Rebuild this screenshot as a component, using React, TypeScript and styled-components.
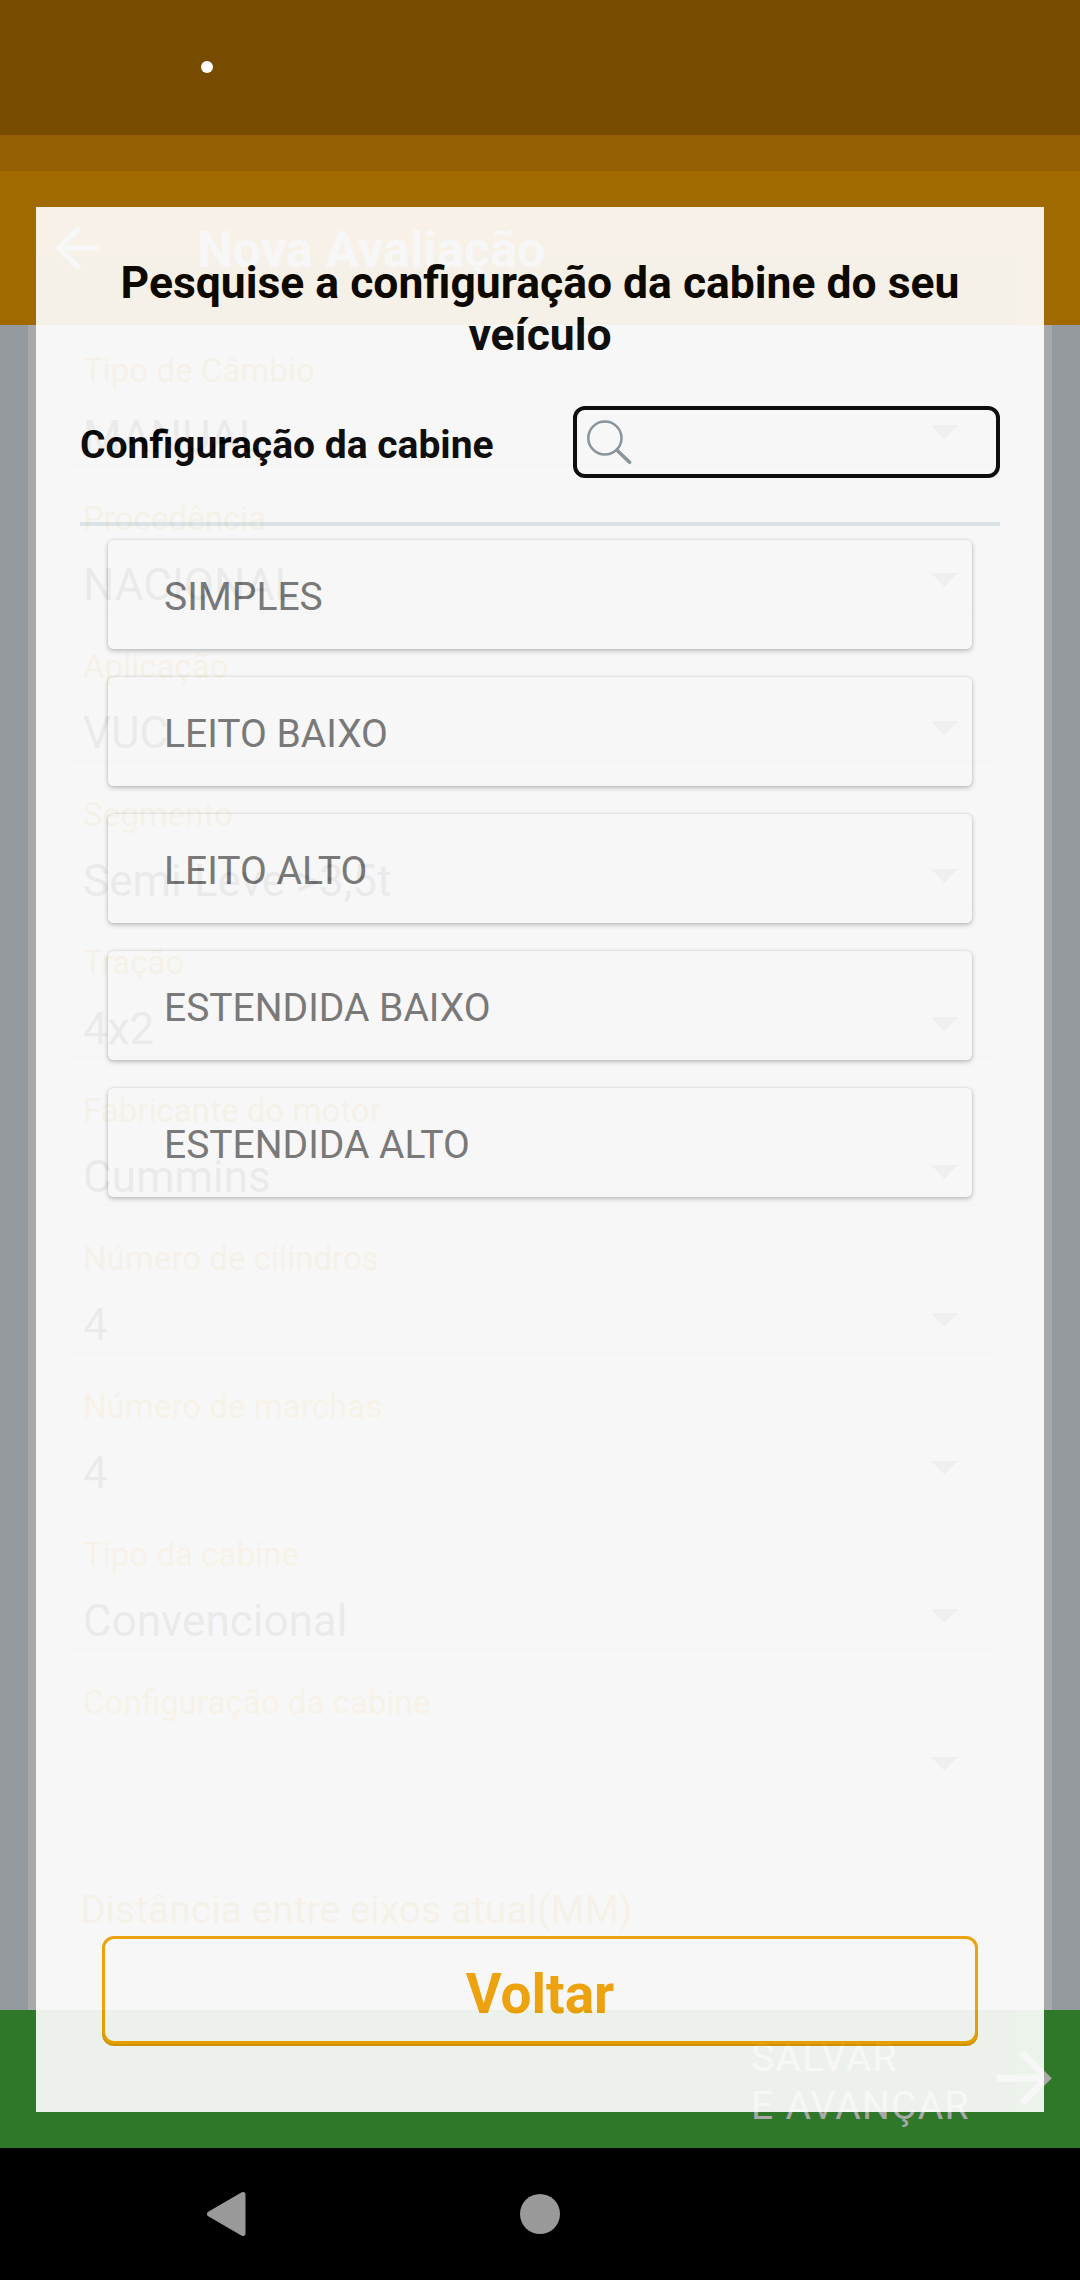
import React from "react";
import styled, { createGlobalStyle } from "styled-components";

const GlobalStyle = createGlobalStyle`
  *, *::before, *::after { box-sizing: border-box; }
  html, body { margin: 0; padding: 0; background: #000; }
  body { font-family: Roboto, "Noto Sans", sans-serif; }
`;

const Screen = styled.div`
  position: relative;
  display: flex;
  flex-direction: column;
  width: 1080px;
  height: 2280px;
  overflow: hidden;
  background: #000;
`;

const StatusBar = styled.div`
  flex: none;
  height: 135px;
  padding: 61px 0 0 201px;
  background: #774c01;
`;

const StatusDot = styled.div`
  width: 12px;
  height: 12px;
  border-radius: 50%;
  background: #fff;
`;

const StatusStrip = styled.div`
  flex: none;
  height: 36px;
  background: #945e03;
`;

const AppBar = styled.header`
  flex: none;
  display: flex;
  align-items: center;
  height: 154px;
  padding-left: 44px;
  background: #a16a00;
  color: #a9a9a9;
`;

const AppTitle = styled.h1`
  margin: 0 0 0 87px;
  padding-top: 3px;
  font-size: 50.4px;
  line-height: 60px;
  font-weight: 700;
  white-space: nowrap;
`;

const Content = styled.main`
  flex: 1;
  display: flex;
  min-height: 0;
  padding: 0 28px;
  background: #949a9e;
`;

const FormCard = styled.div`
  flex: 1;
  padding: 26px 55px 0 42px;
  background: #a9a9a9;
`;

const Field = styled.div`
  display: grid;
  grid-template-columns: 1fr auto;
  grid-template-rows: 39px 74px 2px;
  height: 148px;
`;

const FieldLabel = styled.div`
  grid-column: 1 / 3;
  padding-left: 13px;
  font-size: 33.1px;
  line-height: 39px;
  color: #a16a00;
  white-space: nowrap;
`;

const FieldValue = styled.div`
  padding: 21px 0 0 13px;
  font-size: 44px;
  line-height: 52px;
  color: #161616;
  white-space: nowrap;
`;

const FieldArrow = styled.svg`
  width: 27px;
  height: 14px;
  margin: 35px 39px 0 0;
  fill: #555;
`;

const FieldLine = styled.div`
  grid-column: 1 / 3;
  background: #959595;
`;

const Distance = styled.div`
  margin: 57px -3px 0 10px;
  padding-bottom: 10px;
  border-bottom: 2px solid #959595;
  font-size: 39px;
  line-height: 45px;
  color: #a16a00;
  white-space: nowrap;
`;

const SaveBar = styled.footer`
  flex: none;
  display: flex;
  justify-content: flex-end;
  height: 138px;
  padding-right: 14.5px;
  background: #2f7829;
  color: #a9a9a9;
`;

const SaveText = styled.div`
  width: 232px;
  padding-top: 24px;
  font-size: 39px;
  line-height: 48px;
  letter-spacing: 1.3px;
  white-space: pre;
`;

const SaveArrow = styled.svg`
  width: 82.5px;
  height: 82.5px;
  margin-top: 27px;
  fill: currentColor;
`;

const NavBar = styled.nav`
  flex: none;
  display: flex;
  align-items: center;
  height: 132px;
  padding-left: 205.5px;
  background: #000;
`;

const BackKey = styled.svg`
  width: 40px;
  height: 46px;
  fill: #999;
  stroke: #999;
`;

const HomeKey = styled.div`
  width: 40px;
  height: 40px;
  margin-left: 274.5px;
  border-radius: 50%;
  background: #999;
`;

const Dialog = styled.section`
  position: absolute;
  left: 36px;
  top: 207px;
  display: flex;
  flex-direction: column;
  width: 1008px;
  height: 1905px;
  padding: 50px 44px 68px;
  background: #fff;
  opacity: 0.91;
`;

const DialogTitle = styled.h2`
  margin: 0;
  font-size: 44.45px;
  line-height: 52px;
  font-weight: 700;
  text-align: center;
  color: #000;
`;

const SearchRow = styled.div`
  display: flex;
  justify-content: space-between;
  height: 72px;
  margin-top: 45px;
`;

const SearchLabel = styled.label`
  padding-top: 17px;
  font-size: 39px;
  line-height: 45px;
  font-weight: 700;
  color: #000;
`;

const SearchBox = styled.div`
  width: 427px;
  padding: 9px;
  border: 4px solid #000;
  border-radius: 12px;
`;

const SearchGlyph = styled.svg`
  display: block;
  width: 48px;
  height: 48px;
  fill: none;
  stroke: #87929a;
  stroke-linecap: round;
`;

const Divider = styled.div`
  height: 4px;
  margin-top: 44px;
  background: #e0e9ed;
`;

const OptionList = styled.div`
  display: flex;
  flex-direction: column;
  gap: 28px;
  margin: 14px 28px 0;
`;

const Option = styled.div`
  height: 109px;
  padding: 35px 0 0 56px;
  border-radius: 5.5px;
  background: #fff;
  box-shadow: 0 2px 5px rgba(0, 0, 0, 0.24), 0 0 3px rgba(0, 0, 0, 0.12);
  font-size: 39px;
  line-height: 45px;
  color: #757575;
`;

const BackButton = styled.button`
  height: 108px;
  margin: auto 22px 0;
  padding: 8px 0 0;
  border: 3px solid #f4a200;
  border-radius: 12px;
  background: #fff;
  box-shadow: 0 2px 0 #dc9500;
  font-family: inherit;
  font-size: 55px;
  line-height: 64px;
  font-weight: 700;
  color: #f4a200;
`;

const fields = [
  { label: "Tipo de Câmbio", value: "MANUAL" },
  { label: "Procedência", value: "NACIONAL" },
  { label: "Aplicação", value: "VUC" },
  { label: "Segmento", value: "Semi-Leve >3,5t" },
  { label: "Tração", value: "4x2" },
  { label: "Fabricante do motor", value: "Cummins" },
  { label: "Número de cilindros", value: "4" },
  { label: "Número de marchas", value: "4" },
  { label: "Tipo da cabine", value: "Convencional" },
  { label: "Configuração da cabine", value: "" },
];

const options = ["SIMPLES", "LEITO BAIXO", "LEITO ALTO", "ESTENDIDA BAIXO", "ESTENDIDA ALTO"];

export default function App() {
  return (
    <>
      <GlobalStyle />
      <Screen>
        <StatusBar>
          <StatusDot />
        </StatusBar>
        <StatusStrip />
        <AppBar>
          <svg width="66" height="66" viewBox="0 0 24 24" fill="currentColor">
            <path d="M20 11H7.83l5.59-5.59L12 4l-8 8 8 8 1.41-1.41L7.83 13H20v-2z" />
          </svg>
          <AppTitle>Nova Avaliação</AppTitle>
        </AppBar>
        <Content>
          <FormCard>
            {fields.map((field) => (
              <Field key={field.label}>
                <FieldLabel>{field.label}</FieldLabel>
                <FieldValue>{field.value}</FieldValue>
                <FieldArrow viewBox="0 0 27 14">
                  <path d="M0 0h27L13.5 14z" />
                </FieldArrow>
                <FieldLine />
              </Field>
            ))}
            <Distance>Distância entre eixos atual(MM)</Distance>
          </FormCard>
        </Content>
        <SaveBar>
          <SaveText>{"SALVAR\nE AVANÇAR"}</SaveText>
          <SaveArrow viewBox="0 0 24 24">
            <path d="M12 4l-1.41 1.41L16.17 11H4v2h12.17l-5.58 5.59L12 20l8-8z" />
          </SaveArrow>
        </SaveBar>
        <NavBar>
          <BackKey viewBox="0 0 40 46">
            <path d="M3.5 23L37 3.5v39z" strokeWidth="5" strokeLinejoin="round" />
          </BackKey>
          <HomeKey />
        </NavBar>

        <Dialog>
          <DialogTitle>Pesquise a configuração da cabine do seu veículo</DialogTitle>
          <SearchRow>
            <SearchLabel>Configuração da cabine</SearchLabel>
            <SearchBox>
              <SearchGlyph viewBox="0 0 48 48">
                <circle cx="18.9" cy="19" r="16.6" strokeWidth="2.5" />
                <path d="M31 31.3L43.6 43.3" strokeWidth="3.6" />
              </SearchGlyph>
            </SearchBox>
          </SearchRow>
          <Divider />
          <OptionList>
            {options.map((option) => (
              <Option key={option}>{option}</Option>
            ))}
          </OptionList>
          <BackButton>Voltar</BackButton>
        </Dialog>
      </Screen>
    </>
  );
}
